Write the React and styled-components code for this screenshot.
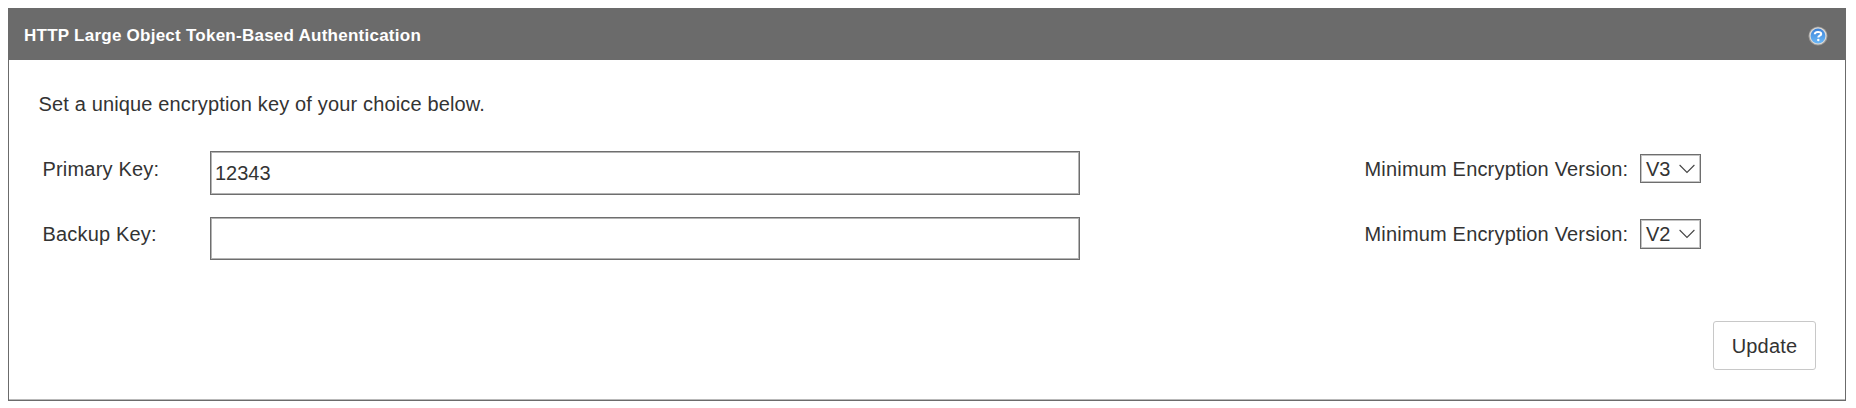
import React from "react";
import styled, { createGlobalStyle } from "styled-components";

const GlobalStyle = createGlobalStyle`
  * { box-sizing: border-box; }
  body {
    margin: 0;
    background: #fff;
    color: #333;
    font: 20px/24px "Liberation Sans", Arial, sans-serif;
  }
`;

const Page = styled.main`
  padding: 8px 10px 7px 8px;
`;

const Panel = styled.section`
  height: 393px;
  border: 1px solid #6b6b6b;
  border-top: 0;
  box-shadow: inset 0 -1px 0 #b9b9b9;
`;

const Header = styled.header`
  display: flex;
  align-items: center;
  justify-content: space-between;
  height: 52px;
  padding: 0 17px 0 15px;
  background: #6b6b6b;
`;

const Title = styled.h1`
  margin: 3px 0 0;
  color: #fff;
  font-size: 17px;
  line-height: 20px;
  letter-spacing: 0.25px;
`;

const HelpIcon = styled.svg`
  display: block;
  margin-top: 3px;
`;

const Body = styled.div`
  padding: 32px 29px 0 30px;
`;

const Intro = styled.p`
  margin: 0 0 0 -0.5px;
  letter-spacing: 0.15px;
`;

const Row = styled.div`
  display: grid;
  grid-template-columns: 167px 870px 285px 275px auto;
  align-items: start;
  height: ${(p) => p.$height}px;
  padding-left: 4px;
`;

const Fields = styled.form`
  padding-top: 35px;
`;

const Label = styled.label`
  grid-column: ${(p) => p.$column};
  padding-top: ${(p) => p.$top}px;
  margin-left: -0.5px;
  letter-spacing: 0.18px;
  white-space: nowrap;
`;

const KeyInput = styled.input`
  width: 870px;
  height: ${(p) => p.$height}px;
  padding: 0 4px;
  border: 1px solid #6e6e6e;
  border-radius: 0;
  outline: 0;
  box-shadow: inset 0 0 0 1px #b4b4b4;
  background: #fff;
  color: #333;
  font: inherit;
`;

const Version = styled.button`
  display: flex;
  align-items: center;
  justify-content: space-between;
  width: 61px;
  height: ${(p) => p.$height}px;
  margin-top: ${(p) => p.$top}px;
  padding: 0 5px;
  border: 1px solid #6e6e6e;
  box-shadow: inset 0 0 0 1px #c4c4c4;
  background: #fff;
  color: #333;
  font: inherit;
`;

const Actions = styled.div`
  display: flex;
  justify-content: flex-end;
  padding-top: 40px;
`;

const UpdateButton = styled.button`
  width: 103px;
  height: 49px;
  padding: 0;
  border: 1px solid #c8c8c8;
  border-radius: 3px;
  background: #fff;
  color: #333;
  font: inherit;
  letter-spacing: 0.2px;
`;

const Help = () => (
  <HelpIcon width="20" height="20" viewBox="0 0 20 20" role="img" aria-label="Help">
    <defs>
      <linearGradient id="helpFill" x1="0" y1="0" x2="0" y2="1">
        <stop offset="0" stopColor="#3d83d8" />
        <stop offset="1" stopColor="#6ab8f8" />
      </linearGradient>
    </defs>
    <circle cx="10" cy="10" r="9.6" fill="#989694" />
    <circle cx="10" cy="9.8" r="8.6" fill="#dddbd8" />
    <circle cx="10" cy="10" r="7.4" fill="url(#helpFill)" />
    <path d="M6.8 8.3C6.8 5.2 13.2 5.2 13.2 8C13.2 9.9 10.3 9.5 10.3 11.5" fill="none" stroke="#fff" strokeWidth="2.1" />
    <circle cx="10.3" cy="14" r="1.2" fill="#fff" />
  </HelpIcon>
);

const Chevron = () => (
  <svg width="16" height="10" viewBox="0 0 16 10" aria-hidden="true">
    <path d="M0.6 1L8 8.4L15.4 1" fill="none" stroke="#444" strokeWidth="1.1" />
  </svg>
);

const rows = [
  { label: "Primary Key:", value: "12343", version: "V3", height: 66, input: 44, select: 29, top: 3, labelTop: 6 },
  { label: "Backup Key:", value: "", version: "V2", height: 64, input: 43, select: 30, top: 2, labelTop: 5 },
];

export default function App() {
  return (
    <Page>
      <GlobalStyle />
      <Panel>
        <Header>
          <Title>HTTP Large Object Token-Based Authentication</Title>
          <Help />
        </Header>
        <Body>
          <Intro>Set a unique encryption key of your choice below.</Intro>
          <Fields>
            {rows.map((row) => (
              <Row key={row.label} $height={row.height}>
                <Label $column={1} $top={row.labelTop}>{row.label}</Label>
                <KeyInput aria-label={row.label} defaultValue={row.value} $height={row.input} />
                <Label $column={4} $top={row.labelTop}>Minimum Encryption Version:</Label>
                <Version type="button" $height={row.select} $top={row.top}>
                  {row.version}
                  <Chevron />
                </Version>
              </Row>
            ))}
            <Actions>
              <UpdateButton type="button">Update</UpdateButton>
            </Actions>
          </Fields>
        </Body>
      </Panel>
    </Page>
  );
}
